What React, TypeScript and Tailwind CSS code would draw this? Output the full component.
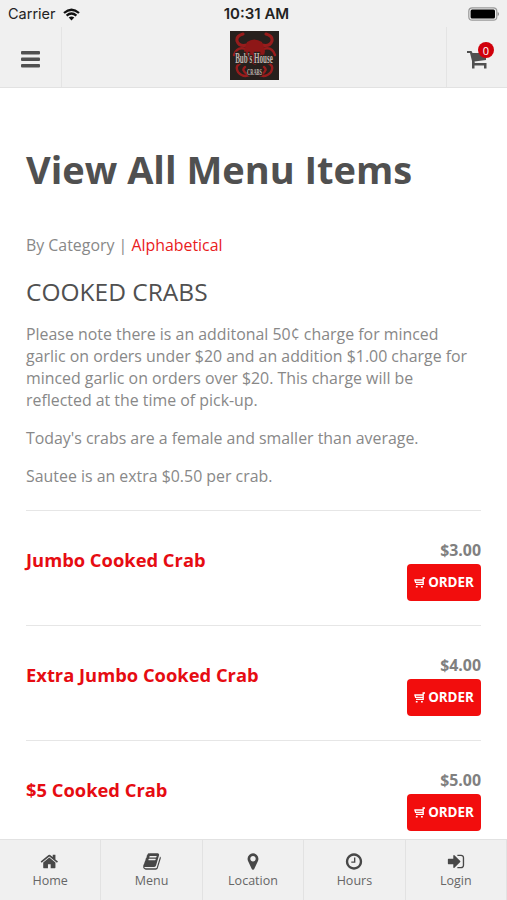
import type { ReactNode } from "react";

const items = [
  { name: "Jumbo Cooked Crab", price: "$3.00" },
  { name: "Extra Jumbo Cooked Crab", price: "$4.00" },
  { name: "$5 Cooked Crab", price: "$5.00" },
];

const tabs = [
  {
    label: "Home",
    path: "M1408 992v480q0 26-19 45t-45 19h-384v-384h-256v384h-384q-26 0-45-19t-19-45v-480q0-1 .5-3t.5-3l575-474 575 474q1 2 1 6zm223-69l-62 74q-8 9-21 11h-3q-13 0-21-7l-692-577-692 577q-12 8-24 7-13-2-21-11l-62-74q-8-10-7-23.5t11-21.5l719-599q32-26 76-26t76 26l244 204v-195q0-14 9-23t23-9h192q14 0 23 9t9 23v408l219 182q10 8 11 21.5t-7 23.5z",
  },
  {
    label: "Menu",
    path: "M1703 478q40 57 18 129l-275 906q-19 64-76.5 107.5t-122.5 43.5h-923q-77 0-148.5-53.5t-99.5-131.5q-24-67-2-127 0-4 3-27t4-37q1-8-3-21.5t-3-19.5q2-11 8-21t16.5-23.5 16.5-23.5q23-38 45-91.5t30-91.5q3-10 .5-30t-.5-28q3-11 17-28t17-23q21-36 42-92t25-90q1-9-2.5-32t.5-28q4-13 22-30.5t22-22.5q19-26 42.5-84.5t27.5-96.5q1-8-3-25.5t-2-26.5q2-8 9-18t18-23 17-21q8-12 16.5-30.5t15-35 16-36 19.5-32 26.5-23.5 36-11.5 47.5 5.5l-1 3q38-9 51-9h761q74 0 114 56t18 130l-274 906q-36 119-71.5 153.5t-128.5 34.5h-869q-27 0-38 15-11 16-1 43 24 70 144 70h923q29 0 56-15.5t35-41.5l300-987q7-22 5-57 38 15 59 43zm-1064 2q-4 13 2 22.5t20 9.5h608q13 0 25.5-9.5t16.5-22.5l21-64q4-13-2-22.5t-20-9.5h-608q-13 0-25.5 9.5t-16.5 22.5zm-83 256q-4 13 2 22.5t20 9.5h608q13 0 25.5-9.5t16.5-22.5l21-64q4-13-2-22.5t-20-9.5h-608q-13 0-25.5 9.5t-16.5 22.5z",
  },
  {
    label: "Location",
    path: "M1152 640q0-106-75-181t-181-75-181 75-75 181 75 181 181 75 181-75 75-181zm256 0q0 109-33 179l-364 774q-16 33-47.5 52t-67.5 19-67.5-19-46.500-52l-365-774q-33-70-33-179 0-212 150-362t362-150 362 150 150 362z",
  },
  {
    label: "Hours",
    path: "M1024 544v448q0 14-9 23t-23 9h-320q-14 0-23-9t-9-23v-64q0-14 9-23t23-9h224v-352q0-14 9-23t23-9h64q14 0 23 9t9 23zm416 352q0-148-73-273t-198-198-273-73-273 73-198 198-73 273 73 273 198 198 273 73 273-73 198-198 73-273zm224 0q0 209-103 385.5t-279.5 279.5-385.5 103-385.5-103-279.5-279.5-103-385.5 103-385.5 279.5-279.5 385.5-103 385.5 103 279.5 279.5 103 385.5z",
  },
  {
    label: "Login",
    path: "M1312 896q0 26-19 45l-544 544q-19 19-45 19t-45-19-19-45v-288h-448q-26 0-45-19t-19-45v-384q0-26 19-45t45-19h448v-288q0-26 19-45t45-19 45 19l544 544q19 19 19 45zm352-352v704q0 119-84.5 203.5t-203.5 84.5h-320q-13 0-22.5-9.5t-9.5-22.5q0-4-1-20t-.5-26.5 3-23.5 10-19.5 20.5-6.5h320q66 0 113-47t47-113v-704q0-66-47-113t-113-47h-312l-11.5-1-11.5-3-8-5.5-7-9-2-13.5q0-4-1-20t-.5-26.5 3-23.5 10-19.5 20.5-6.5h320q119 0 203.5 84.5t84.5 203.5z",
  },
];

const StatusBar = () => (
  <div className="grid h-[27px] grid-cols-3 items-center px-2 font-['Inter',sans-serif] text-[15px] leading-none text-[#222]">
    <div className="flex items-center gap-[7px] pt-px">
      <span className="text-[14.500px]">Carrier</span>
      <svg width="17" height="13" viewBox="0 0 17 13" fill="none" stroke="#111" strokeWidth="2.3">
        <path d="M1 5Q8.500-1.500 16 5M3.600 7.600Q8.500 3.500 13.400 7.600" />
        <path d="M8.500 12.500L5.700 9.600Q8.500 7.500 11.300 9.600Z" fill="#111" stroke="none" />
      </svg>
    </div>
    <span className="pl-[6px] text-center font-semibold whitespace-nowrap">10:31 AM</span>
    <svg className="justify-self-end" width="32" height="14" viewBox="0 0 32 14">
      <rect x="1.800" y=".8" width="28" height="12.400" rx="3.500" fill="#eee" stroke="#999" strokeWidth="1.200" />
      <rect x="3.600" y="2.500" width="24.400" height="9" rx="1.500" fill="#000" />
      <path d="M30.700 5v4q1.300-.5 1.300-2t-1.300-2z" fill="#888" />
    </svg>
  </div>
);

const Logo = () => (
  <svg width="49" height="49" viewBox="0 0 49 49">
    <rect width="49" height="49" fill="#27201d" />
    <g fill="none" stroke="#981c1c" strokeWidth="2.400" strokeLinecap="round">
      <path d="M17 14Q9 16 7 10Q6 5 13 3M32 14Q40 16 42 10Q43 5 36 3" strokeWidth="3" />
      <path d="M16 18Q7 15 4 24M33 18Q42 15 45 24M13 31Q4 34 8 41Q13 47 20 44M36 31Q45 34 41 41Q36 47 29 44M15 36Q11 39 17 43M34 36Q38 39 32 43" />
    </g>
    <path d="M17 11Q24 6 32 11L35 20Q34 31 25 34Q16 31 14 20Z" fill="#8e1717" />
    <g fill="#c0b6b0" stroke="#27201d" strokeWidth="2" paintOrder="stroke" fontFamily="Liberation Serif, serif" fontWeight="bold" textAnchor="middle">
      <text transform="translate(24 32) scale(.64 1.250)" fontSize="11">Bub&apos;s House</text>
      <text transform="translate(24.500 44) scale(.55 1.150)" fontSize="8">CRABS</text>
    </g>
  </svg>
);

const Header = () => (
  <header className="h-[88px] shrink-0 border-b border-[#e2e2e2] bg-[#f0f0f0]">
    <StatusBar />
    <div className="flex h-[60px] justify-between">
      <button className="flex w-[62px] items-center justify-center border-r border-[#e4e4e4] pt-1">
        <svg width="19" height="17" viewBox="0 0 19 17" fill="#505050">
          <rect width="19" height="3.400" rx="1" />
          <rect y="6.500" width="19" height="3.400" rx="1" />
          <rect y="13" width="19" height="3.400" rx="1" />
        </svg>
      </button>
      <div className="pt-1">
        <Logo />
      </div>
      <button className="relative flex w-[61px] items-start border-l border-[#e4e4e4] pt-[23px] pl-5">
        <svg width="21" height="19" viewBox="0 0 21 19" fill="#505050">
          <path d="M0 1h4.500l1 2H19v7L7.500 11.500l.3 1.500H19.500v5.500H17v-3H7.500v3H5V11L3 3H0z" />
        </svg>
        <span className="absolute top-[15px] right-[13px] flex size-4 items-center justify-center rounded-full bg-[#d0000b] text-[11px] leading-none text-white">
          0
        </span>
      </button>
    </div>
  </header>
);

const OrderButton = ({ children }: { children: ReactNode }) => (
  <button className="flex h-[37px] w-[74px] items-center justify-center gap-[3px] rounded-[4px] bg-[#f20d0d] text-[13.400px] font-bold text-white">
    <svg width="11" height="11" viewBox="0 0 11 11" fill="none" stroke="white" strokeWidth="1.300">
      <path d="M11 1H9.200V7.400H2M.3 3h8.900M1 3l.6 2.400h7.600" />
      <path d="M1.800 9.700h1.800M7 9.700h1.800" strokeWidth="1.500" />
    </svg>
    {children}
  </button>
);

const TabBar = () => (
  <nav className="grid h-[61px] shrink-0 grid-cols-5 border-t border-[#e2e2e2] bg-[#f0f0f0]">
    {tabs.map((tab) => (
      <a key={tab.label} className="flex flex-col items-center border-r border-[#e2e2e2] pt-3">
        <svg width="20" height="19" viewBox="0 0 1792 1792" fill="#484848">
          <path d={tab.path} />
        </svg>
        <span className="mt-px text-[12.500px] leading-[18px] text-[#666]">{tab.label}</span>
      </a>
    ))}
  </nav>
);

export default function App() {
  return (
    <div className="flex h-[900px] w-[507px] flex-col overflow-hidden bg-white font-['Open_Sans',sans-serif] text-[#888]">
      <Header />
      <main className="min-h-0 flex-1 overflow-hidden px-[26px]">
        <h1 className="mt-[54px] text-[38px] leading-[54px] font-bold whitespace-nowrap text-[#505050]">
          View All Menu Items
        </h1>
        <p className="mt-[38px] text-[15.900px] leading-[22px]">
          By Category | <a className="text-[#e9201c]">Alphabetical</a>
        </p>
        <h2 className="mt-[19px] text-[24.500px] leading-[34px] text-[#505050]">COOKED CRABS</h2>
        <div className="mt-[14px] flex flex-col gap-4 text-[15.900px] leading-[22px]">
          <p>
            Please note there is an additonal 50¢ charge for minced garlic on orders under $20 and
            an addition $1.00 charge for minced garlic on orders over $20. This charge will be
            reflected at the time of pick-up.
          </p>
          <p>Today&apos;s crabs are a female and smaller than average.</p>
          <p>Sautee is an extra $0.50 per crab.</p>
        </div>
        <ul className="mt-[23px]">
          {items.map((item) => (
            <li key={item.name} className="flex h-[115px] justify-between border-t border-[#e6e6e6]">
              <h3 className="mt-[35px] text-[18.350px] leading-[27px] font-bold text-[#e60c12]">
                {item.name}
              </h3>
              <div className="mt-7 flex flex-col items-end">
                <span className="text-[15.900px] leading-[22px] font-bold text-[#808080]">
                  {item.price}
                </span>
                <div className="mt-[3px]">
                  <OrderButton>ORDER</OrderButton>
                </div>
              </div>
            </li>
          ))}
        </ul>
      </main>
      <TabBar />
    </div>
  );
}
